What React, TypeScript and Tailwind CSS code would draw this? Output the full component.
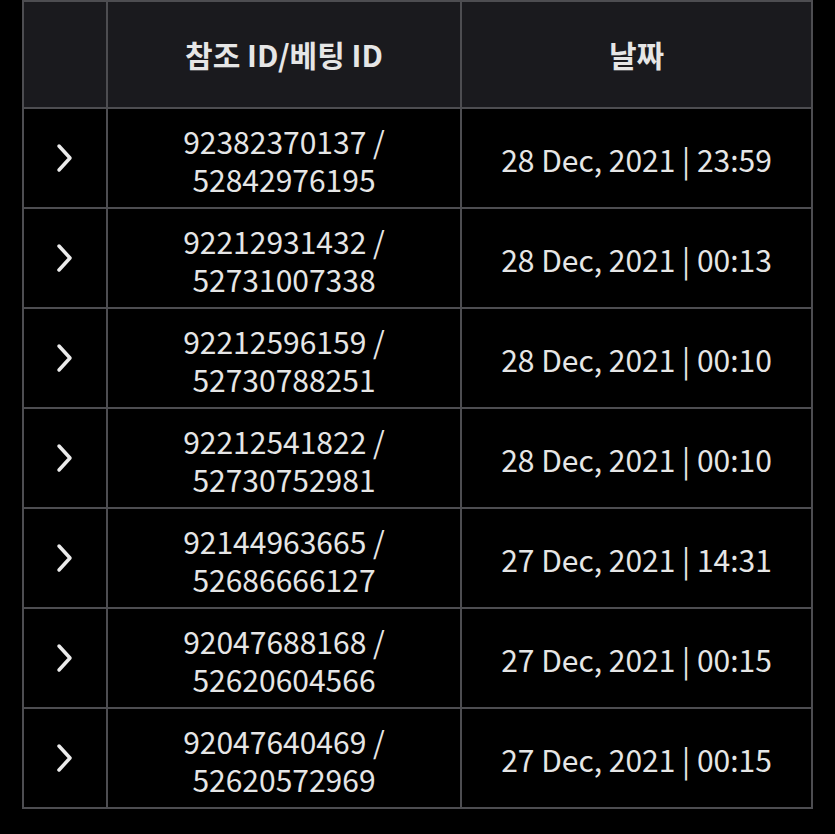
import React from 'react';

const rows = [
    { ref: '92382370137', bet: '52842976195', date: '28 Dec, 2021', time: '23:59' },
    { ref: '92212931432', bet: '52731007338', date: '28 Dec, 2021', time: '00:13' },
    { ref: '92212596159', bet: '52730788251', date: '28 Dec, 2021', time: '00:10' },
    { ref: '92212541822', bet: '52730752981', date: '28 Dec, 2021', time: '00:10' },
    { ref: '92144963665', bet: '52686666127', date: '27 Dec, 2021', time: '14:31' },
    { ref: '92047688168', bet: '52620604566', date: '27 Dec, 2021', time: '00:15' },
    { ref: '92047640469', bet: '52620572969', date: '27 Dec, 2021', time: '00:15' },
];

const Chevron = () => (
    <svg width="20" height="30" viewBox="0 0 20 30" fill="none">
        <path d="M4 3l11 12-11 12" stroke="#ececec" strokeWidth="3.5" strokeLinecap="round" strokeLinejoin="round" />
    </svg>
);

export default function App() {
    return (
        <div
            className="min-h-[834px] w-[835px] bg-black text-[#e6e6e6]"
            style={{ fontFamily: '"Noto Sans CJK KR", "Noto Sans", sans-serif' }}
        >
            <div className="ml-[22px] w-[791px] border-x-2 border-t-2 border-[#4d4d51]">
                <div className="flex h-[107px] border-b-2 border-[#4d4d51] bg-[#1a1a1e] text-[30px] font-bold">
                    <div className="w-[84px] border-r-2 border-[#4d4d51]" />
                    <div className="flex w-[354px] items-center justify-center border-r-2 border-[#4d4d51]">
                        참조 ID/베팅 ID
                    </div>
                    <div className="flex flex-1 items-center justify-center">날짜</div>
                </div>
                {rows.map((row) => (
                    <div key={row.ref} className="flex h-[100px] border-b-2 border-[#4d4d51] text-[30px]">
                        <div className="flex w-[84px] items-center justify-center border-r-2 border-[#4d4d51]">
                            <Chevron />
                        </div>
                        <div className="flex w-[354px] items-center justify-center border-r-2 border-[#4d4d51] pt-[3px]">
                            <p className="text-center leading-[38px]">
                                {row.ref} /<br />
                                {row.bet}
                            </p>
                        </div>
                        <div className="flex flex-1 items-center justify-center pt-[3px]">
                            {row.date} | {row.time}
                        </div>
                    </div>
                ))}
            </div>
        </div>
    );
}
